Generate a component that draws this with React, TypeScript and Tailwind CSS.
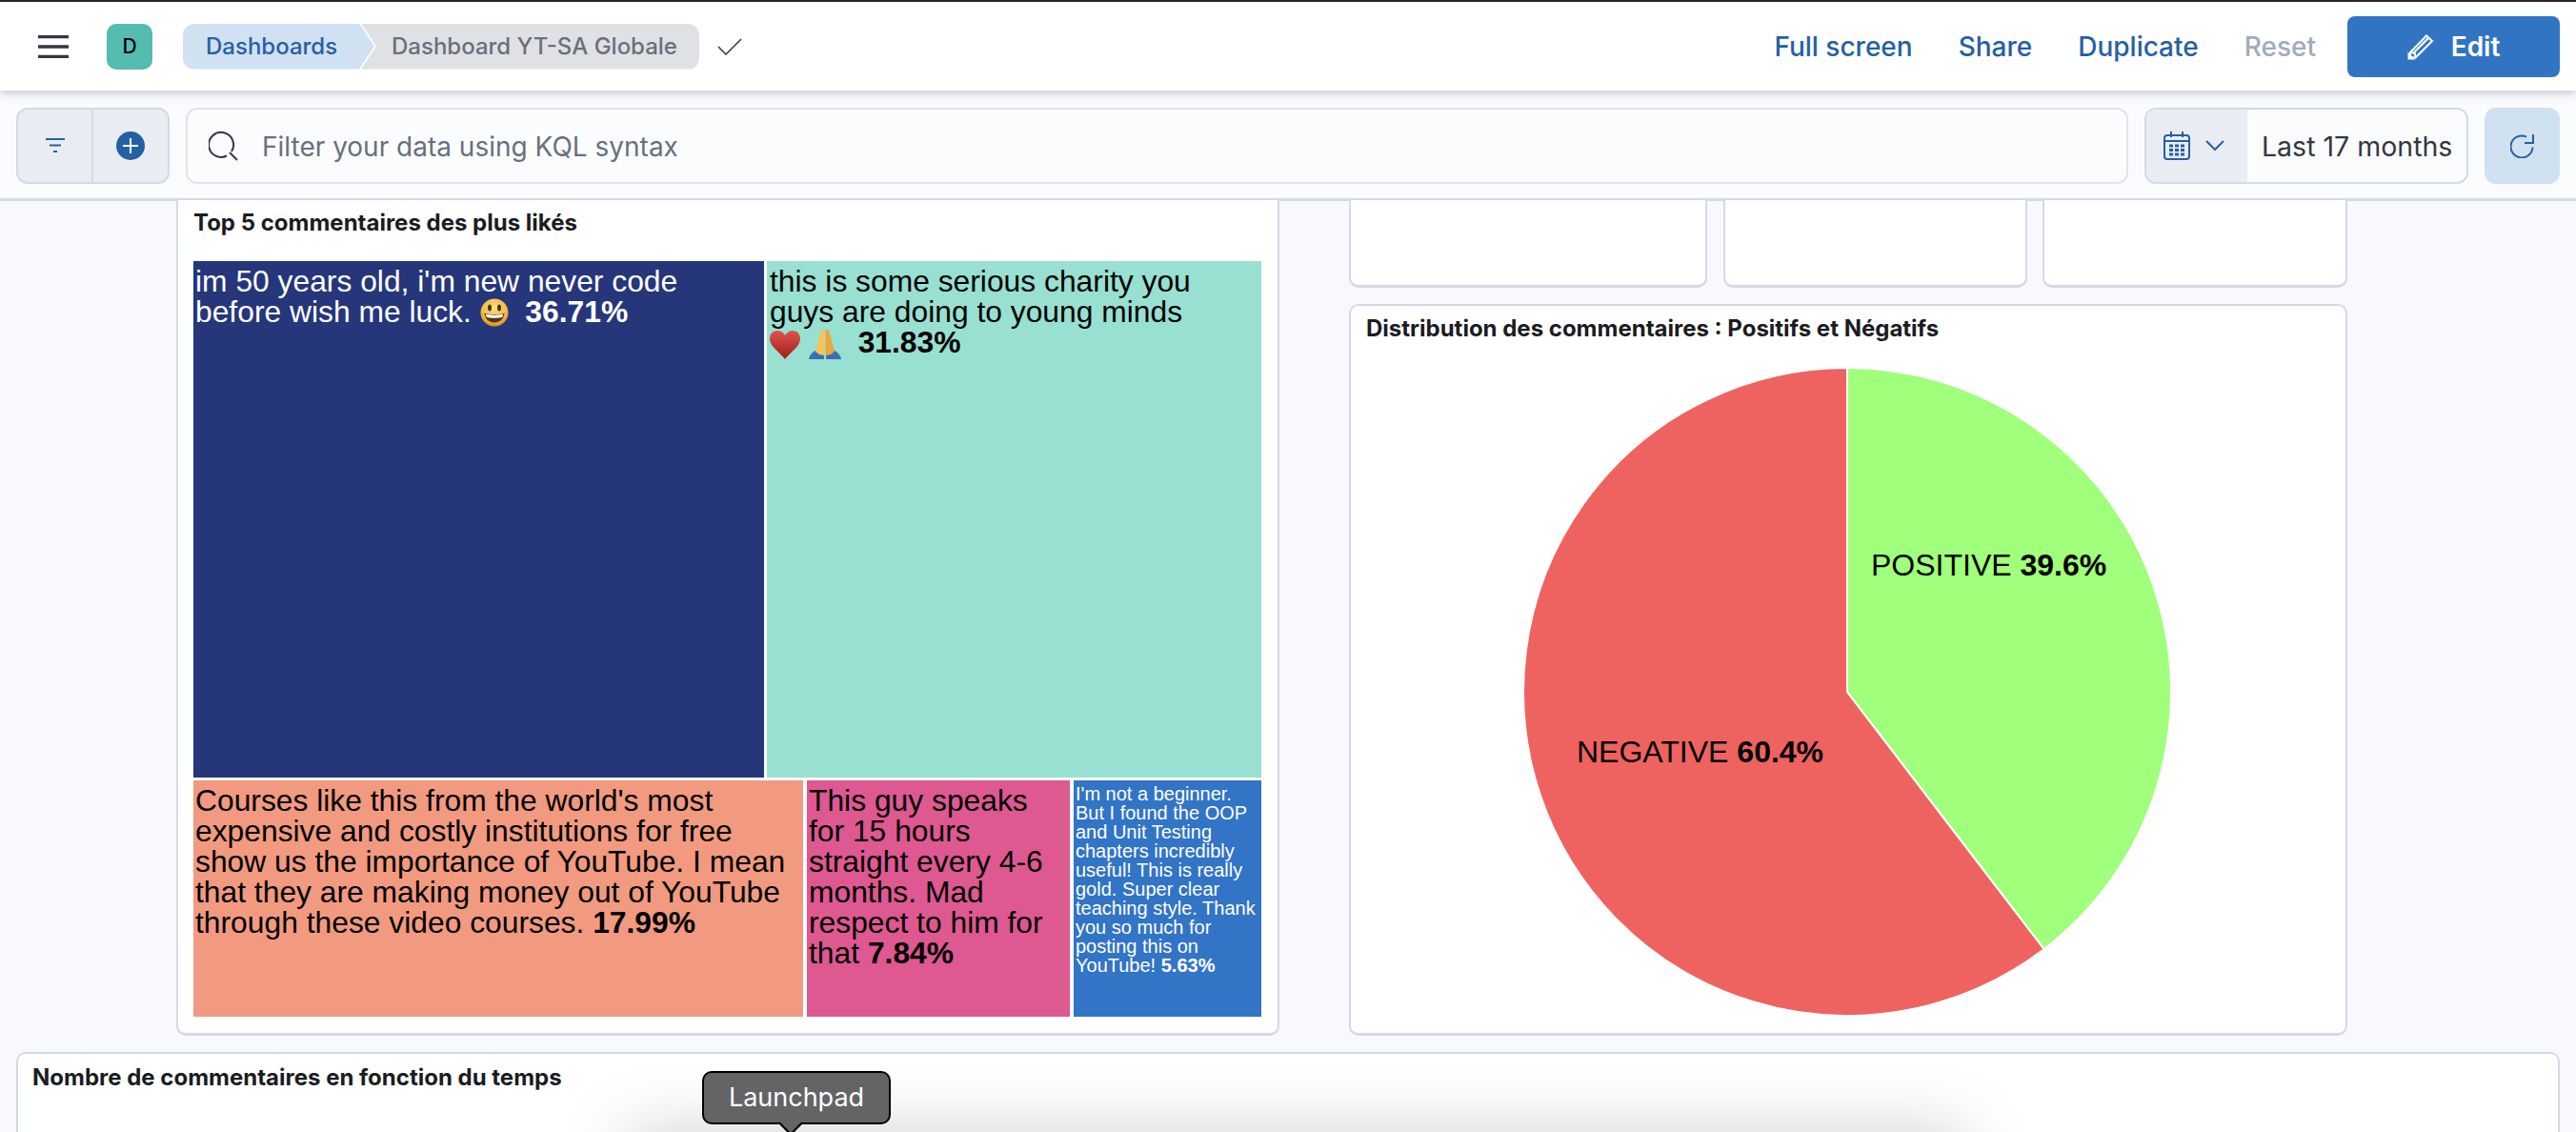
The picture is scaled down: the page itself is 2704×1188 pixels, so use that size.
const ui = { fontFamily: "Inter, 'Liberation Sans', sans-serif" };

function Smiley() {
  return (
    <svg viewBox="0 0 30 30" className="inline-block h-[30px] w-[30px] align-[-5px]">
      <defs>
        <radialGradient id="face" cx="50%" cy="35%" r="65%">
          <stop offset="0%" stopColor="#fbe07a" />
          <stop offset="70%" stopColor="#f0bb45" />
          <stop offset="100%" stopColor="#d98f24" />
        </radialGradient>
      </defs>
      <circle cx="15" cy="15" r="14.5" fill="url(#face)" />
      <ellipse cx="10" cy="10" rx="2" ry="3.6" fill="#4b3418" />
      <ellipse cx="20" cy="10" rx="2" ry="3.6" fill="#4b3418" />
      <path d="M4.5 15.5C9 17.5 21 17.5 25.5 15.5C25 22 20.5 25.5 15 25.5C9.5 25.5 5 22 4.5 15.5Z" fill="#5a3312" />
      <path d="M6 16.5C10 18 20 18 24 16.5C24 18.5 23.5 19.5 23 20C19 21 11 21 7 20C6.500 19.500 6 18.500 6 16.500Z" fill="#fff" />
    </svg>
  );
}

function Heart() {
  return (
    <svg viewBox="0 0 32 30" className="inline-block h-[30px] w-[32px] align-[-7px]">
      <defs>
        <linearGradient id="heart" x1="0" y1="0" x2="0" y2="1">
          <stop offset="0%" stopColor="#e0514f" />
          <stop offset="100%" stopColor="#a01f16" />
        </linearGradient>
      </defs>
      <path d="M16 30C11 23 0 17 0 8.500C0 3.500 3.500 0 8 0C11.500 0 14.500 2 16 5C17.500 2 20.500 0 24 0C28.500 0 32 3.500 32 8.500C32 17 21 23 16 30Z" fill="url(#heart)" />
    </svg>
  );
}

function PrayingHands() {
  return (
    <svg viewBox="0 0 34 32" className="ml-[9px] inline-block h-[32px] w-[34px] align-[-7px]">
      <path d="M0 32C1 27 4 24 9 22L16 28V32Z" fill="#3a6fb5" />
      <path d="M34 32C33 27 30 24 25 22L18 28V32Z" fill="#3a6fb5" />
      <path d="M16.500 28L11 27L7 24C9 16 11 8 13 2C14 0 16 0 16.500 2Z" fill="#f5c35c" />
      <path d="M17.500 28L23 27L27 24C25 16 23 8 21 2C20 0 18 0 17.500 2Z" fill="#e8a83e" />
    </svg>
  );
}

function Panel({ title, className, children }: { title?: string; className: string; children?: React.ReactNode }) {
  return (
    <div className={`rounded-[10px] border-2 border-b-[3px] border-[#d3dae6] bg-white ${className}`}>
      {title && (
        <h2 className="text-[24px] leading-[30px] font-bold text-[#1a1c21]" style={ui}>
          {title}
        </h2>
      )}
      {children}
    </div>
  );
}

function Header() {
  return (
    <header className="relative z-20 flex h-[95px] items-center border-t-2 border-[#24272e] bg-white pr-[17px] pl-[40px] shadow-[0_2px_10px_rgba(65,80,110,0.35)]">
      <svg viewBox="0 0 32 24" className="h-[24px] w-[32px] shrink-0">
        <path d="M0 1.500H32M0 12H32M0 22.500H32" stroke="#343741" strokeWidth="3.500" />
      </svg>
      <div className="ml-[40px] flex h-[48px] w-[48px] items-center justify-center rounded-[10px] bg-[#54bdb0] text-[21px] font-medium text-black">
        D
      </div>
      <nav className="ml-[32px] flex h-[48px] items-stretch text-[24px] font-medium">
        <div className="relative z-10 flex w-[201px] items-center rounded-l-[12px] bg-[#d0e1f2] pl-[24px] text-[#2660a4] [clip-path:polygon(0_0,185px_0,201px_50%,185px_100%,0_100%)]">
          Dashboards
        </div>
        <div className="-ml-[14px] flex w-[355px] items-center rounded-r-[12px] bg-[#e0e1e4] pl-[32px] text-[#69707d] [clip-path:polygon(0_0,100%_0,100%_100%,0_100%,16px_50%)]">
          Dashboard YT-SA Globale
        </div>
      </nav>
      <svg viewBox="0 0 26 18" className="ml-[19px] h-[18px] w-[26px]">
        <path d="M1 9L9 17L25 1" fill="none" stroke="#343741" strokeWidth="1.500" />
      </svg>
      <div className="ml-auto flex items-center text-[28px] font-medium text-[#2660a4]">
        <span>Full screen</span>
        <span className="ml-[48px]">Share</span>
        <span className="ml-[48px]">Duplicate</span>
        <span className="ml-[48px] text-[#a2abba]">Reset</span>
        <button type="button" className="ml-[33px] flex h-[64px] w-[223px] items-center justify-center gap-[18px] rounded-[8px] bg-[#3274c4] font-semibold text-white">
          <svg viewBox="0 0 28 28" className="h-[28px] w-[28px]" fill="none" stroke="#fff" strokeWidth="2">
            <path d="M3 20L20 2.500L26 8L8.500 25.500H2.500Z" />
            <path d="M7 20L22 5M8.500 25.500L8 21L3 20" />
            <path d="M1.500 26.500V22L6 26.500Z" fill="#fff" />
          </svg>
          Edit
        </button>
      </div>
    </header>
  );
}

function FilterBar() {
  return (
    <div className="flex h-[116px] items-center gap-[17px] border-b-[3px] border-[#d3dae6] bg-[#fafbfd] pt-[2px] pr-[17px] pl-[17px]">
      <div className="flex h-[80px] w-[161px] shrink-0 overflow-hidden rounded-[12px] border-2 border-[#d3dae6] bg-[#e9edf3]">
        <div className="flex w-[79px] items-center justify-center border-r-2 border-[#d3dae6]">
          <svg viewBox="0 0 20 16" className="h-[16px] w-[20px]">
            <path d="M0 1H20M4 7.500H16M8 14H12" stroke="#2660a4" strokeWidth="2" />
          </svg>
        </div>
        <div className="flex flex-1 items-center justify-center">
          <svg viewBox="0 0 30 30" className="h-[30px] w-[30px]">
            <circle cx="15" cy="15" r="15" fill="#2660a4" />
            <path d="M15 7V23M7 15H23" stroke="#fff" strokeWidth="2" />
          </svg>
        </div>
      </div>
      <div className="flex h-[80px] flex-1 items-center rounded-[12px] border-2 border-[#e1e4ec] bg-[#fbfcfd] pl-[22px] text-[#69707d]">
        <svg viewBox="0 0 32 32" className="h-[32px] w-[32px] shrink-0" fill="none" stroke="#343741" strokeWidth="2">
          <path d="M19 26.500A13 13 0 1 1 24 22" />
          <path d="M22 23L30 31" />
        </svg>
        <span className="ml-[24px] pt-[3px] text-[28px]">Filter your data using KQL syntax</span>
      </div>
      <div className="flex h-[80px] w-[340px] shrink-0 overflow-hidden rounded-[12px] border-2 border-[#d3dae6] bg-[#fbfcfd]">
        <div className="flex w-[106px] items-center bg-[#e9edf3] pl-[18px]">
          <svg viewBox="0 0 28 30" className="h-[30px] w-[28px]" fill="none" stroke="#2660a4" strokeWidth="2">
            <rect x="1" y="4" width="26" height="25" rx="3" />
            <path d="M1 10H27M8 0V6M20 0V6" />
            <path d="M6 15H22M6 19.500H22M6 24H22" strokeWidth="3" strokeDasharray="4 2" />
          </svg>
          <svg viewBox="0 0 20 12" className="ml-[16px] h-[12px] w-[20px]" fill="none" stroke="#2660a4" strokeWidth="2">
            <path d="M1 1L10 10L19 1" />
          </svg>
        </div>
        <div className="flex flex-1 items-center pt-[3px] pl-[15px] text-[28.5px] text-[#343741]">Last 17 months</div>
      </div>
      <div className="flex h-[80px] w-[79px] shrink-0 items-center justify-center rounded-[12px] bg-[#d0e1f2]">
        <svg viewBox="0 0 26 26" className="h-[26px] w-[26px]" fill="none" stroke="#2660a4" strokeWidth="2">
          <path d="M17 3.600A11.500 11.500 0 1 0 23.500 14.500" />
          <path d="M24 1V10H15" />
        </svg>
      </div>
    </div>
  );
}

function Treemap() {
  return (
    <div className="mt-[25px] flex w-[1121px] flex-col gap-[3px] text-[31.8px] leading-[32px]" style={{ fontFamily: "'Liberation Sans', Arial, sans-serif" }}>
      <div className="flex h-[542px] gap-[3px]">
        <div className="w-[599px] bg-[#26367a] pt-[5px] pl-[2px] text-white">
          im 50 years old, i'm new never code before wish me luck. <Smiley />{"  "}&nbsp;<b>36.71%</b>
        </div>
        <div className="flex-1 bg-[#98e0d2] pt-[5px] pl-[3px] text-black">
          this is some serious charity you guys are doing to young minds
          <br />
          <Heart />
          <PrayingHands /> &nbsp;<b>31.83%</b>
        </div>
      </div>
      <div className="flex h-[248px] gap-[3px]">
        <div className="w-[640px] bg-[#f19a80] pt-[5px] pl-[2px] text-black">
          Courses like this from the world's most expensive and costly institutions for free show us the importance of YouTube. I mean that they are making money out of YouTube through these video courses. <b>17.99%</b>
        </div>
        <div className="ml-[1px] w-[276px] bg-[#de5891] pt-[5px] pl-[2px] text-black">
          This guy speaks for 15 hours straight every 4-6 months. Mad respect to him for that <b>7.84%</b>
        </div>
        <div className="ml-[1px] flex-1 bg-[#3274c6] pt-[4px] pl-[2px] text-[20px] leading-[20px] text-white">
          I'm not a beginner. But I found the OOP and Unit Testing chapters incredibly useful! This is really gold. Super clear teaching style. Thank you so much for posting this on YouTube! <b>5.63%</b>
        </div>
      </div>
    </div>
  );
}

function PieChart() {
  return (
    <svg viewBox="0 0 684 684" className="mt-[24px] ml-[163px] h-[684px] w-[684px]" style={{ fontFamily: "'Liberation Sans', Arial, sans-serif" }}>
      <path d="M342 342V2A340 340 0 1 0 548.700 612Z" fill="#ee6360" stroke="#fff" strokeWidth="2" />
      <path d="M342 342V2A340 340 0 0 1 548.700 612Z" fill="#a0ff7b" stroke="#fff" strokeWidth="2" />
      <text x="367" y="220" fontSize="32" fill="#000">
        POSITIVE <tspan fontWeight="700">39.6%</tspan>
      </text>
      <text x="58" y="416" fontSize="32" fill="#000">
        NEGATIVE <tspan fontWeight="700">60.4%</tspan>
      </text>
    </svg>
  );
}

export default function App() {
  return (
    <div className="relative h-[1188px] w-[2704px] overflow-hidden bg-[#f8f9fd]" style={ui}>
      <Header />
      <FilterBar />
      <div className="-mt-[1px] flex pl-[185px]">
        <Panel title="Top 5 commentaires des plus likés" className="h-[877px] w-[1158px] rounded-t-none border-t-0 pt-[9px] pl-[16px]">
          <Treemap />
        </Panel>
        <div className="ml-[73px] flex w-[1048px] flex-col gap-[17px]">
          <div className="flex h-[92px]">
            <Panel className="w-[376px] rounded-t-none border-t-0" />
            <Panel className="ml-[17px] w-[319px] rounded-t-none border-t-0" />
            <Panel className="ml-[16px] w-[320px] rounded-t-none border-t-0" />
          </div>
          <Panel title="Distribution des commentaires : Positifs et Négatifs" className="h-[768px] pt-[9px] pl-[16px]">
            <PieChart />
          </Panel>
        </div>
      </div>
      <Panel title="Nombre de commentaires en fonction du temps" className="mx-[17px] mt-[17px] h-[200px] pt-[10px] pl-[15px]" />

      {/* dock shadow + tooltip from the OS, sits over the page */}
      <div className="absolute top-[1190px] left-[660px] h-[70px] w-[1400px] bg-black/20 blur-[35px]" />
      <div className="absolute top-[1124px] left-[737px] flex h-[56px] w-[198px] items-center justify-center rounded-[10px] border-2 border-black bg-[#636466] text-[27px] text-white">
        Launchpad
        <div className="absolute top-[44px] left-[82px] h-[18px] w-[18px] rotate-45 border-r-2 border-b-2 border-black bg-[#636466]" />
      </div>
    </div>
  );
}
